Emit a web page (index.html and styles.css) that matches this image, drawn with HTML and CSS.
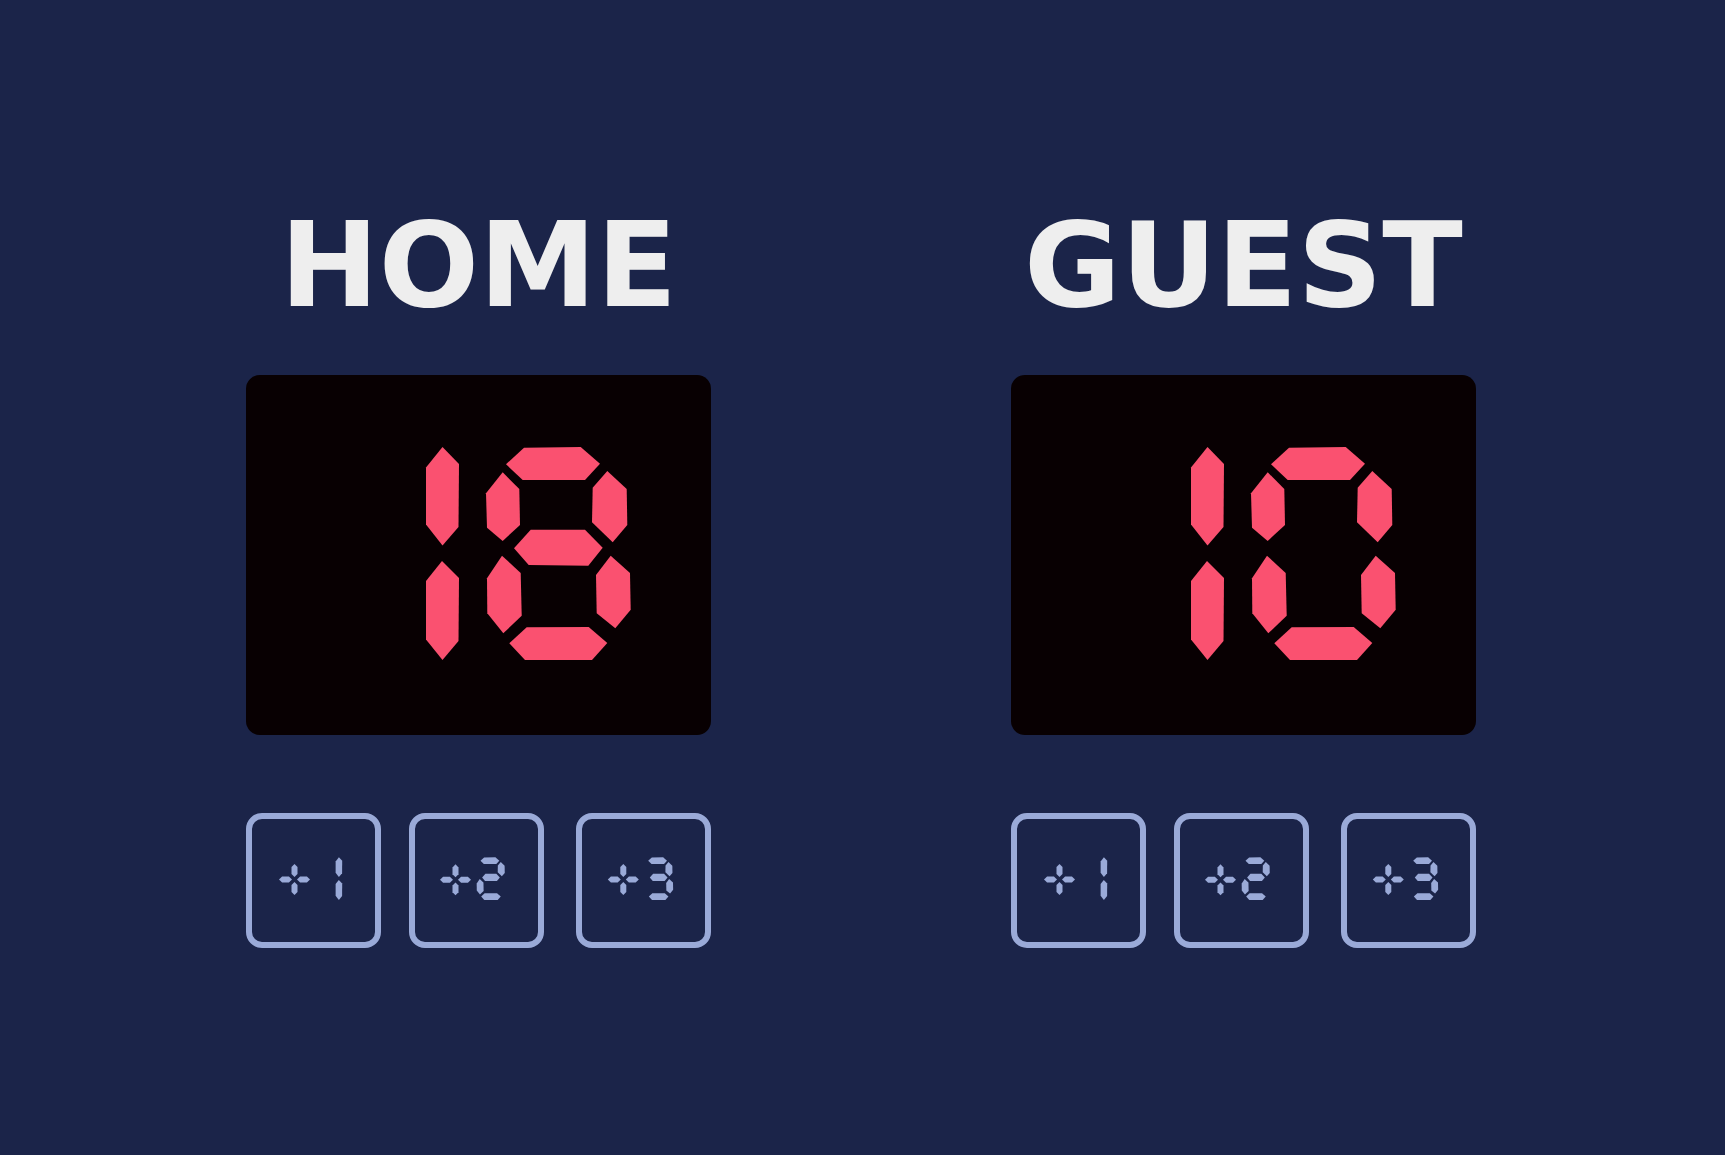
FILE: index.html
```html
<!DOCTYPE html>
<html lang="en">
<head>
<meta charset="utf-8">
<title>Scoreboard</title>
<link rel="stylesheet" href="styles.css">
</head>
<body>
<svg class="defs" width="0" height="0" aria-hidden="true">
  <defs>
    <polygon id="sa" points="38,0.7 94.7,0 114,16.7 99,33 36.7,33 20,17.3"/>
    <polygon id="sb" points="121.3,24 140.7,42 141.3,78 126.7,95.3 106,75.3 106.7,40.7"/>
    <polygon id="sc" points="124.7,108.7 144,126 144.7,162.7 129.3,181.3 110.7,166.3 110,128"/>
    <polygon id="sd" points="23.3,196.3 40.7,180.3 102.7,180 121.3,196 106,213 39,213"/>
    <polygon id="se" points="16,108.7 34.7,126 35.7,168.7 17.3,186.3 1.3,166.3 1,131.3"/>
    <polygon id="sf" points="16.7,25.3 33.3,42 34,78 16.7,94 1,80.7 0,46.3"/>
    <polygon id="sg" points="28,101.3 44.7,82.7 99,82.7 116.7,100.7 102.3,118.7 42.7,118"/>
    <g id="d1">
      <polygon points="124.5,0 141,17 140.5,80 124.5,98.5 108,77.5 108,20.5"/>
      <polygon points="124,114 141,131 140.5,194 124.5,213 108,192.5 108,134"/>
    </g>
    <g id="d0"><use href="#sa"/><use href="#sb"/><use href="#sc"/><use href="#sd"/><use href="#se"/><use href="#sf"/></g>
    <g id="d2"><use href="#sa"/><use href="#sb"/><use href="#sg"/><use href="#se"/><use href="#sd"/></g>
    <g id="d3"><use href="#sa"/><use href="#sb"/><use href="#sg"/><use href="#sc"/><use href="#sd"/></g>
    <g id="d8"><use href="#sa"/><use href="#sb"/><use href="#sc"/><use href="#sd"/><use href="#se"/><use href="#sf"/><use href="#sg"/></g>
    <g id="plus">
      <polygon points="-77.5,0 -62,-15 -28,-15 -12.5,0 -28,15 -62,15"/>
      <polygon points="77.5,0 62,-15 28,-15 12.5,0 28,15 62,15"/>
      <polygon points="0,-77.5 15,-62 15,-28 0,-13 -15,-28 -15,-62"/>
      <polygon points="0,77.5 15,62 15,28 0,13 -15,28 -15,62"/>
    </g>
  </defs>
</svg>

<main class="board">
  <section class="team">
    <h2 class="team-name">HOME</h2>
    <div class="score">
      <svg class="score-digits" viewBox="0 -2 336 217" aria-hidden="true">
        <use href="#d1"/>
        <use href="#d8" x="168"/>
      </svg>
      <span class="score-text">18</span>
    </div>
    <div class="buttons">
      <button class="add-btn" type="button">
        <svg class="btn-digits" viewBox="6 6 123 123" aria-hidden="true">
          <use href="#plus" transform="translate(48.5 66.5) scale(0.2)"/>
          <use href="#d1" transform="translate(68 44.3) scale(0.2)"/>
        </svg>
        <span class="btn-text">+1</span>
      </button>
      <button class="add-btn" type="button">
        <svg class="btn-digits" viewBox="6 6 123 123" aria-hidden="true">
          <use href="#plus" transform="translate(46.5 66.8) scale(0.2)"/>
          <use href="#d2" transform="translate(67.5 44.3) scale(0.2)"/>
        </svg>
        <span class="btn-text">+2</span>
      </button>
      <button class="add-btn add-btn-last" type="button">
        <svg class="btn-digits" viewBox="6 6 123 123" aria-hidden="true">
          <use href="#plus" transform="translate(47.3 66.5) scale(0.2)"/>
          <use href="#d3" transform="translate(68.2 44.3) scale(0.2)"/>
        </svg>
        <span class="btn-text">+3</span>
      </button>
    </div>
  </section>

  <section class="team">
    <h2 class="team-name">GUEST</h2>
    <div class="score">
      <svg class="score-digits" viewBox="0 -2 336 217" aria-hidden="true">
        <use href="#d1"/>
        <use href="#d0" x="168"/>
      </svg>
      <span class="score-text">10</span>
    </div>
    <div class="buttons">
      <button class="add-btn" type="button">
        <svg class="btn-digits" viewBox="6 6 123 123" aria-hidden="true">
          <use href="#plus" transform="translate(48.5 66.5) scale(0.2)"/>
          <use href="#d1" transform="translate(68 44.3) scale(0.2)"/>
        </svg>
        <span class="btn-text">+1</span>
      </button>
      <button class="add-btn" type="button">
        <svg class="btn-digits" viewBox="6 6 123 123" aria-hidden="true">
          <use href="#plus" transform="translate(46.5 66.8) scale(0.2)"/>
          <use href="#d2" transform="translate(67.5 44.3) scale(0.2)"/>
        </svg>
        <span class="btn-text">+2</span>
      </button>
      <button class="add-btn add-btn-last" type="button">
        <svg class="btn-digits" viewBox="6 6 123 123" aria-hidden="true">
          <use href="#plus" transform="translate(47.3 66.5) scale(0.2)"/>
          <use href="#d3" transform="translate(68.2 44.3) scale(0.2)"/>
        </svg>
        <span class="btn-text">+3</span>
      </button>
    </div>
  </section>
</main>
</body>
</html>
```

FILE: styles.css
```css
html, body {
  margin: 0;
  padding: 0;
}

body {
  background: #1b2449;
  min-height: 100vh;
  font-family: "DejaVu Sans", "Liberation Sans", sans-serif;
}

.defs {
  position: absolute;
  width: 0;
  height: 0;
  overflow: hidden;
}

.board {
  display: flex;
  justify-content: center;
  gap: 300px;
  padding: 206px 3px 0 0;
}

.team {
  width: 465px;
  display: flex;
  flex-direction: column;
}

.team-name {
  margin: 0;
  font-size: 118px;
  line-height: 118px;
  font-weight: 700;
  color: #eeeeee;
  text-align: center;
}

.score {
  position: relative;
  margin-top: 51px;
  height: 360px;
  background: #080002;
  border-radius: 14px;
  box-sizing: border-box;
  padding: 70px 0 0 72px;
}

.score-digits {
  display: block;
  width: 336px;
  height: 217px;
  fill: #fa5170;
}

/* selectable text layer laid over the LED digits */
.score-text {
  position: absolute;
  left: 176px;
  top: 72px;
  width: 212px;
  height: 213px;
  font-family: "DejaVu Sans Mono", monospace;
  font-size: 170px;
  line-height: 213px;
  text-align: center;
  color: transparent;
  white-space: nowrap;
}

.buttons {
  margin-top: 78px;
  display: flex;
  gap: 28px;
}

.add-btn {
  position: relative;
  width: 135px;
  height: 135px;
  box-sizing: border-box;
  padding: 0;
  margin: 0;
  border: 6px solid #9aaad8;
  border-radius: 16px;
  background: transparent;
  cursor: pointer;
  display: block;
}

.add-btn-last {
  margin-left: auto;
}

.btn-digits {
  display: block;
  width: 123px;
  height: 123px;
  fill: #9aaad8;
}

.btn-text {
  position: absolute;
  left: 24px;
  top: 32px;
  width: 75px;
  height: 44px;
  font-family: "DejaVu Sans Mono", monospace;
  font-size: 36px;
  line-height: 44px;
  text-align: center;
  color: transparent;
  white-space: nowrap;
}
```
